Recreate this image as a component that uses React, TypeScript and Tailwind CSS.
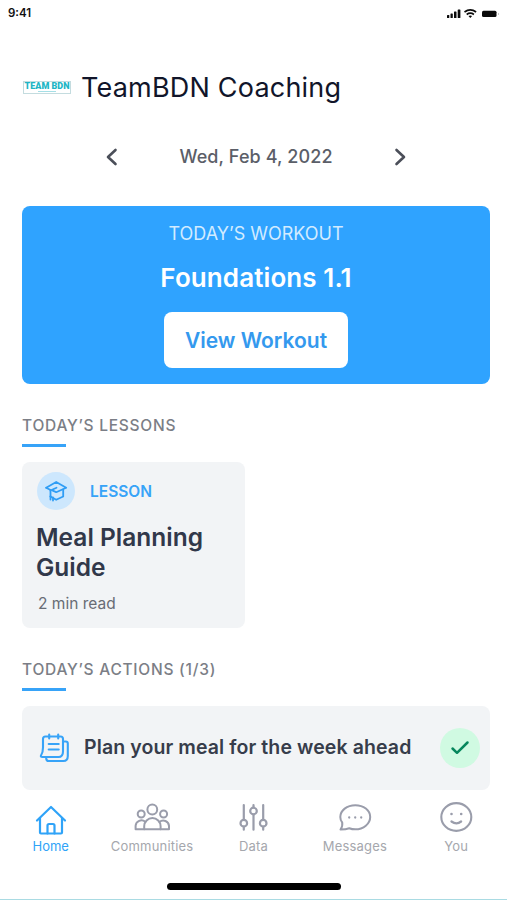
import { ReactNode } from "react"

const HomeIcon = () => (
  <svg className="h-9 w-9" viewBox="0 0 36 36" fill="none" stroke="currentColor" strokeWidth={2.2} strokeLinecap="round" strokeLinejoin="round">
    <path d="M4 18.5 18 5l14 13.5" />
    <path d="M7 16v14.5q0 1 1 1h20q1 0 1-1V16" />
    <path d="M14.5 31.5v-8q0-1.5 1.5-1.5h4q1.5 0 1.5 1.5v8" />
  </svg>
)

const CommunitiesIcon = () => (
  <svg className="h-9 w-9" viewBox="0 0 36 36" fill="none" stroke="currentColor" strokeWidth={2} strokeLinecap="round" strokeLinejoin="round">
    <circle cx="18.3" cy="7.5" r="4.9" />
    <circle cx="7.2" cy="12" r="3.5" />
    <circle cx="29.6" cy="12" r="3.5" />
    <path d="M10.2 27.3v-3a8.2 8.2 0 0 1 16.4 0v3z" />
    <path d="M10.2 27.3H1.6v-3.5a5.8 5.8 0 0 1 9.6-4" />
    <path d="M26.6 27.3h8.4v-3.5a5.8 5.8 0 0 0-9.4-4" />
  </svg>
)

const DataIcon = () => (
  <svg className="h-9 w-9" viewBox="0 0 36 36" fill="none" stroke="currentColor" strokeWidth={2.2} strokeLinecap="round">
    <path d="M8.8 3v14.7M8.8 24.7v3" />
    <circle cx="8.8" cy="21.2" r="3.3" />
    <path d="M18.5 3v2.5M18.5 12.5v15.2" />
    <circle cx="18.5" cy="9" r="3.3" />
    <path d="M28.2 3v14.7M28.2 24.7v3" />
    <circle cx="28.2" cy="21.2" r="3.3" />
  </svg>
)

const MessagesIcon = () => (
  <svg className="h-9 w-9" viewBox="0 0 36 36" fill="none" stroke="currentColor" strokeWidth={2} strokeLinecap="round" strokeLinejoin="round">
    <path d="M5.2 20.5C3.7 18.7 3.3 17 3.3 15 3.3 8.3 10 3.2 18.3 3.2S33.2 8.3 33.2 15 26.5 27.3 18.3 27.3c-2.3 0-4-.3-6-1.1-2.8 1.1-5.5 1.3-8.8 1.3 1.5-2 2.2-4.2 1.7-7z" />
    <path d="M12.2 15.5h.01M18.2 15.5h.01M24.2 15.5h.01" strokeWidth={2.3} />
  </svg>
)

const YouIcon = () => (
  <svg className="h-9 w-9" viewBox="0 0 36 36" fill="none" stroke="currentColor" strokeWidth={2.1} strokeLinecap="round">
    <ellipse cx="18.3" cy="15" rx="15" ry="13.9" />
    <path d="M13.5 12h.01M23.2 12h.01" strokeWidth={2.6} />
    <path d="M13.5 19.5q5 3.7 9.6 0" strokeWidth={2.3} />
  </svg>
)

const LessonIcon = () => (
  <svg className="h-6 w-6" viewBox="0 0 24 24" fill="none" stroke="currentColor" strokeWidth={1.8} strokeLinecap="round" strokeLinejoin="round">
    <path d="M2.2 8.700 12.200 3l10 5.700-10 4.500-3.500-1.500" />
    <path d="M2.200 8.700 6.500 11v6.500" />
    <path d="M12.500 8.700 6.500 11.500" />
    <path d="M6.500 17.500l5.700 3.300 7-3.300v-7" />
    <path d="M6.500 17.500v3M9 18.500v3" />
  </svg>
)

const NotesIcon = () => (
  <svg className="h-8 w-8" viewBox="0 0 32 32" fill="none" stroke="currentColor" strokeWidth={2.1} strokeLinecap="round" strokeLinejoin="round">
    <path d="M6.500 4.500h15q2.500 0 2.500 2.500V19.500q0 5.500-4.500 5.500H3.300q-2 0-1.300-1.500 2-3 2-8V7Q4 4.500 6.500 4.500z" />
    <path d="M10.200 2.500v4M19.200 2.500v4" />
    <path d="M9.700 12h10M9.700 17.500h10" />
    <path d="M25.500 9.500h1.300q2 0 2 2V24q0 5-4.500 5H9.500q-2 0-2.300-2.500" />
  </svg>
)

const SectionTitle = ({ children }: { children: ReactNode }) => (
  <div>
    <h2 className="pt-px text-[15.5px] font-medium leading-5 tracking-[0.75px] text-[#7b7e86]">{children}</h2>
    <div className="mt-2 h-[3px] w-11 bg-[#37a3f8]" />
  </div>
)

const tabs = [
  { label: "Home", icon: <HomeIcon />, active: true },
  { label: "Communities", icon: <CommunitiesIcon /> },
  { label: "Data", icon: <DataIcon /> },
  { label: "Messages", icon: <MessagesIcon /> },
  { label: "You", icon: <YouIcon /> },
]

const App = () => {
  return (
    <div className="flex h-[900px] w-[507px] flex-col overflow-hidden border-b border-[#a9dbe3] bg-white font-['Inter',sans-serif]">
      {/* Status bar */}
      <div className="flex h-[27px] shrink-0 items-center justify-between px-2">
        <span className="text-[11.5px] font-semibold leading-none text-[#111]">9:41</span>
        <svg className="h-3 w-[53px]" viewBox="0 0 53 12" fill="#0a0a0a">
          <rect x="1" y="7" width="2.3" height="3" rx=".6" />
          <rect x="4.5" y="5.5" width="2.3" height="4.5" rx=".6" />
          <rect x="8" y="3.5" width="2.5" height="6.5" rx=".6" />
          <rect x="11.7" y="1.5" width="2.7" height="8.5" rx=".6" />
          <g fill="none" stroke="#0a0a0a" strokeWidth="1.7">
            <path d="M18.5 4q5.8-4.2 11.6 0" />
            <path d="M20.7 6.500q3.600-2.600 7.200 0" />
          </g>
          <path d="M22.500 8q1.800-1.200 3.600 0L24.300 10z" />
          <rect x="36" y="2.800" width="14.500" height="6.200" rx="1.500" />
          <rect x="52" y="5" width=".8" height="2" fill="#bbb" />
        </svg>
      </div>

      {/* Header */}
      <header className="mt-[39px] flex h-[42px] shrink-0 items-center pl-[23px]">
        <div className="flex h-[13px] w-12 flex-col items-center border border-[#c4dcdf] text-[#20b5c5]">
          <span className="whitespace-nowrap font-['Roboto',sans-serif] text-[9px] font-black leading-[9px]">TEAM BDN</span>
          <span className="h-px w-[18px] bg-[#a5dfe6]" />
        </div>
        <h1 className="ml-[10px] text-[27px] leading-none tracking-[0.2px] text-[#11152a]">TeamBDN Coaching</h1>
      </header>

      {/* Date picker */}
      <div className="ml-[102px] mr-[97px] mt-8 flex h-[34px] shrink-0 items-center justify-between text-[#4b4f59]">
        <svg className="h-5 w-5" viewBox="0 0 20 20" fill="none" stroke="currentColor" strokeWidth={2.6} strokeLinecap="round" strokeLinejoin="round">
          <path d="M13.5 3 6 10l7.5 7" />
        </svg>
        <span className="text-lg font-medium leading-none tracking-[0.1px] text-[#5b5e68]">Wed, Feb 4, 2022</span>
        <svg className="h-5 w-5" viewBox="0 0 20 20" fill="none" stroke="currentColor" strokeWidth={2.6} strokeLinecap="round" strokeLinejoin="round">
          <path d="M6.5 3 14 10l-7.5 7" />
        </svg>
      </div>

      {/* Workout */}
      <section className="ml-[22px] mt-8 flex h-[178px] w-[468px] shrink-0 flex-col items-center rounded-lg bg-[#2fa3ff] pt-4">
        <p className="text-lg leading-6 text-[#d2ebff]">TODAY’S WORKOUT</p>
        <p className="mt-4 text-[26px] font-semibold leading-8 tracking-[0.1px] text-white">Foundations 1.1</p>
        <button className="mt-[18px] h-14 w-[184px] rounded-lg bg-white pt-px text-[21px] font-semibold text-[#3499ee]">View Workout</button>
      </section>

      {/* Lessons */}
      <section className="ml-[22px] mt-[31px] shrink-0">
        <SectionTitle>TODAY’S LESSONS</SectionTitle>
        <div className="mt-[15px] h-[166px] w-[223px] rounded-lg bg-[#f2f4f6] pl-[15px] pt-[10px]">
          <div className="flex items-center">
            <div className="flex h-[38px] w-[38px] items-center justify-center rounded-full bg-[#cde7fd] text-[#2f9df5]">
              <LessonIcon />
            </div>
            <span className="ml-[15px] pt-0.5 text-[15.5px] font-semibold text-[#37a3f8]">LESSON</span>
          </div>
          <h3 className="-ml-px mt-3 text-[24.5px] font-semibold leading-[30px] text-[#31384a]">
            Meal Planning
            <br />
            Guide
          </h3>
          <p className="ml-px mt-3 text-[15.5px] leading-5 text-[#686c75]">2 min read</p>
        </div>
      </section>

      {/* Actions */}
      <section className="ml-[22px] mt-[31px] shrink-0">
        <SectionTitle>TODAY’S ACTIONS (1/3)</SectionTitle>
        <div className="mt-[15px] flex h-[84px] w-[468px] items-center rounded-lg bg-[#f2f4f6] pl-[17px] pr-[10px]">
          <span className="text-[#37a3f8]">
            <NotesIcon />
          </span>
          <p className="ml-[13px] whitespace-nowrap text-[19.5px] font-semibold tracking-[0.1px] text-[#373d4b]">Plan your meal for the week ahead</p>
          <div className="ml-auto flex h-10 w-10 items-center justify-center rounded-full bg-[#d0fae2]">
            <svg className="h-5 w-5" viewBox="0 0 20 20" fill="none" stroke="#07875d" strokeWidth={2.5} strokeLinecap="round" strokeLinejoin="round">
              <path d="m2.5 10.5 4.5 4.3L17.5 4.5" />
            </svg>
          </div>
        </div>
      </section>

      {/* Bottom tabs */}
      <nav className="mt-3 grid shrink-0 grid-cols-5">
        {tabs.map((tab) => (
          <div key={tab.label} className={tab.active ? "flex flex-col items-center text-[#2fa3f8]" : "flex flex-col items-center text-[#9a9dab]"}>
            {tab.icon}
            <span className={tab.active ? "-mt-px text-[13px] leading-[18px]" : "-mt-px text-[13px] leading-[18px] tracking-[0.2px] text-[#a5a7ad]"}>{tab.label}</span>
          </div>
        ))}
      </nav>
      <div className="mx-auto mt-7 h-[7px] w-[174px] shrink-0 rounded-full bg-black" />
    </div>
  )
}
export default App
